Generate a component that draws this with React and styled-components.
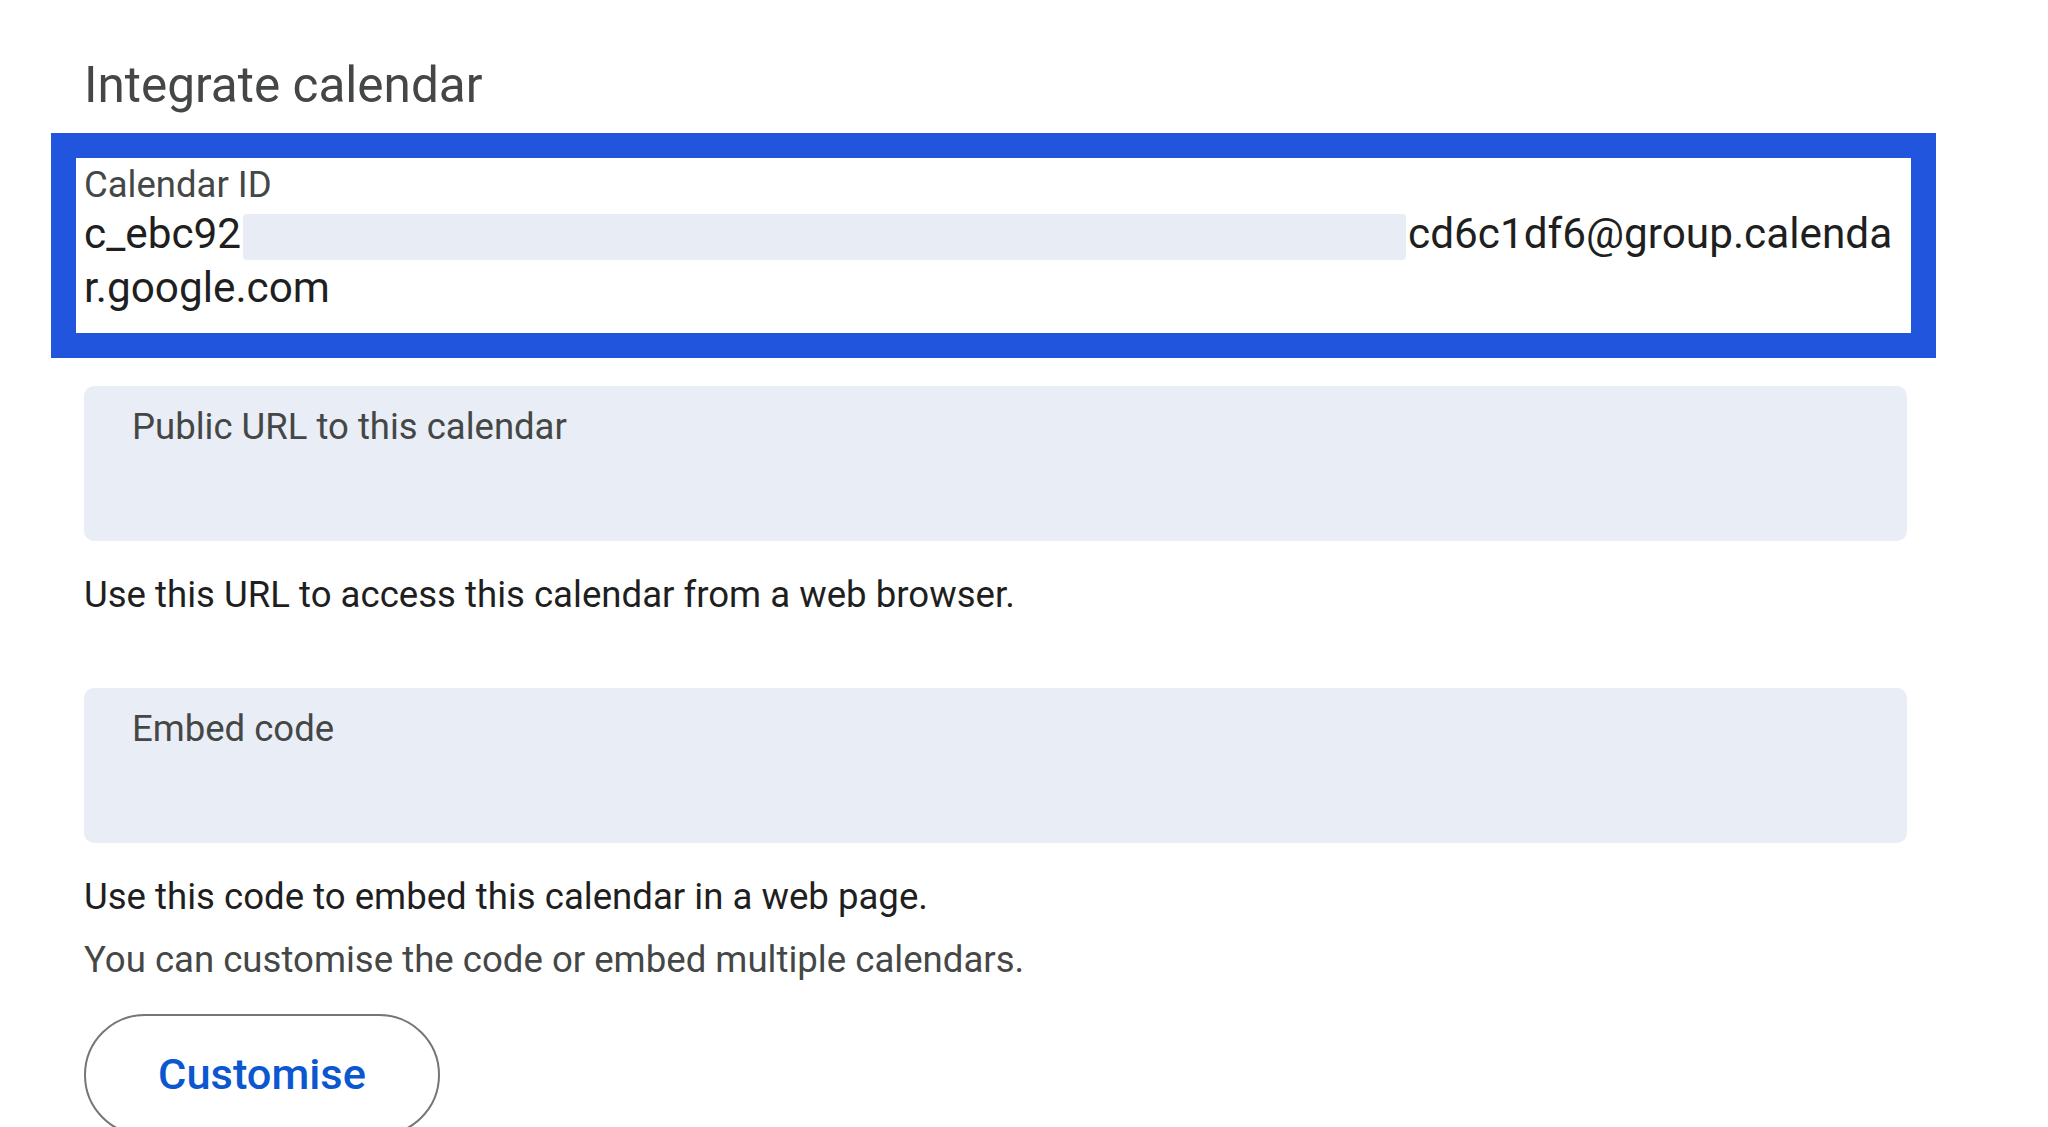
import React from "react";
import styled, { createGlobalStyle } from "styled-components";

const GlobalStyle = createGlobalStyle`
  html, body {
    margin: 0;
    padding: 0;
    background: #ffffff;
  }
  body {
    font-family: Roboto, "Liberation Sans", Arial, sans-serif;
    -webkit-font-smoothing: antialiased;
  }
`;

export default function App() {
  return (
    <>
      <GlobalStyle />
      <Page>
        <Title>Integrate calendar</Title>

        <Highlight>
          <IdCard>
            <FieldLabel>Calendar ID</FieldLabel>
            <IdValue>
              <IdLine>
                c_ebc92
                <Redacted />
                cd6c1df6@group.calenda
              </IdLine>
              <IdLine>r.google.com</IdLine>
            </IdValue>
          </IdCard>
        </Highlight>

        <FilledField>
          <FieldLabel $inset>Public URL to this calendar</FieldLabel>
        </FilledField>
        <HelpText $top={32}>Use this URL to access this calendar from a web browser.</HelpText>

        <FilledField $top={71}>
          <FieldLabel $inset>Embed code</FieldLabel>
        </FilledField>
        <HelpText $top={32}>Use this code to embed this calendar in a web page.</HelpText>
        <HelpText $top={19} $muted>
          You can customise the code or embed multiple calendars.
        </HelpText>

        <OutlineButton type="button">Customise</OutlineButton>
      </Page>
    </>
  );
}

const Page = styled.div`
  padding: 55px 141px 0 84px;
  display: flex;
  flex-direction: column;
  align-items: flex-start;

  & > * {
    flex-shrink: 0;
  }
`;

const Title = styled.h2`
  margin: 0;
  font-size: 49.5px;
  line-height: 60px;
  font-weight: 400;
  color: #444746;
`;

const Highlight = styled.div`
  align-self: stretch;
  margin: 18px -29px 0 -33px;
  border: 25px solid #2255dd;
`;

const IdCard = styled.div`
  background: #ffffff;
  padding: 5px 0 18px 8px;
`;

const FieldLabel = styled.div`
  font-size: 36.5px;
  line-height: 44px;
  color: #444746;
  padding-left: ${(p) => (p.$inset ? "48px" : "0")};
`;

const IdValue = styled.div`
  font-size: 42.3px;
  line-height: 54px;
  color: #1f1f1f;
`;

const IdLine = styled.div`
  white-space: nowrap;
`;

const Redacted = styled.span`
  display: inline-block;
  width: 1163px;
  height: 46px;
  margin: 0 2px;
  vertical-align: -12px;
  border-radius: 4px;
  background: #e8ecf4;
`;

const FilledField = styled.div`
  align-self: stretch;
  box-sizing: border-box;
  height: 155px;
  margin-top: ${(p) => p.$top ?? 28}px;
  padding-top: 19px;
  border-radius: 10px;
  background: #e9edf5;
`;

const HelpText = styled.p`
  margin: ${(p) => p.$top}px 0 0;
  font-size: 36.6px;
  line-height: 44px;
  color: ${(p) => (p.$muted ? "#444746" : "#1f1f1f")};
`;

const OutlineButton = styled.button`
  margin-top: 32px;
  width: 356px;
  height: 122px;
  box-sizing: border-box;
  border: 2px solid #747775;
  border-radius: 61px;
  background: #ffffff;
  color: #0b57d0;
  font-family: Roboto, "Liberation Sans", Arial, sans-serif;
  font-size: 43.4px;
  font-weight: 500;
  line-height: 1;
  cursor: pointer;
`;
